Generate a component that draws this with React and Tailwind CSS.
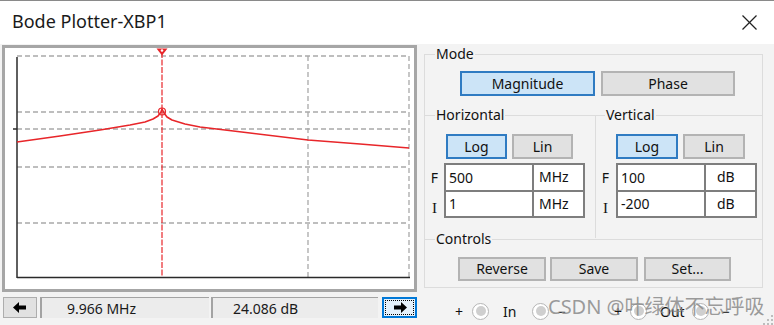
import React from "react";

const F = "font-['Noto_Sans',sans-serif]";

function Btn({ children, w, h = 25, active = false }) {
  return (
    <div
      className={`flex items-center justify-center border-2 text-[14px] leading-none text-[#111] ${
        active ? "bg-[#cce4f7] border-[#2f7bc2]" : "bg-[#e1e1e1] border-[#b3b3b3]"
      }`}
      style={{ width: w, height: h }}
    >
      {children}
    </div>
  );
}

function Inputs({ rows, unitPad }) {
  return (
    <div className="grid grid-cols-[86px_49px] grid-rows-[25px_24px] gap-[2px] p-[2px] bg-[#7e7e7e]">
      {rows.map(([v, u], i) => (
        <React.Fragment key={i}>
          <div className="bg-white flex items-center pl-[3px] text-[14px] leading-[20px] text-[#111]">{v}</div>
          <div className={`bg-white flex items-start pt-[2px] ${unitPad} text-[14px] leading-[20px] text-[#111]`}>{u}</div>
        </React.Fragment>
      ))}
    </div>
  );
}

function Labels() {
  return (
    <div className="flex flex-col w-[19px] text-[14px] text-[#111]">
      <div className="h-[28px] flex items-center justify-center">F</div>
      <div className="h-[27px] flex items-center justify-center pt-[7px] font-['Liberation_Serif',serif] text-[15px]">I</div>
    </div>
  );
}

function Radio() {
  return (
    <div className="w-[17px] h-[17px] rounded-full border border-[#b5b5b5] bg-white flex items-center justify-center">
      <div className="w-[10px] h-[10px] rounded-full bg-[#cfcfcf]" />
    </div>
  );
}

function Arrow({ dir }) {
  return (
    <svg width="14" height="11" viewBox="0 0 14 11">
      {dir === "left" ? (
        <polygon points="0,5.5 6,0 6,3.5 13,3.5 13,7.5 6,7.5 6,11" fill="#000" />
      ) : (
        <polygon points="14,5.5 8,0 8,3.5 1,3.5 1,7.5 8,7.5 8,11" fill="#000" />
      )}
    </svg>
  );
}

export default function App() {
  const gridY = [56, 112, 129, 167, 223];
  return (
    <div className={`relative w-[774px] h-[325px] overflow-hidden bg-[#f3f3f3] ${F}`}>
      {/* Title bar */}
      <div className="h-[44px] bg-white border-t border-[#8a8a8a] flex items-start justify-between">
        <div className="pl-[12px] pt-[8px] text-[18px] leading-[24px] text-[#1a1a1a]">Bode Plotter-XBP1</div>
        <div className="pt-[14px] pr-[17px]">
          <svg width="15" height="15" viewBox="0 0 15 15">
            <line x1="0.5" y1="0.5" x2="14.5" y2="14.5" stroke="#222" strokeWidth="1.2" />
            <line x1="14.5" y1="0.5" x2="0.5" y2="14.5" stroke="#222" strokeWidth="1.2" />
          </svg>
        </div>
      </div>

      <div className="flex items-start">
        {/* Left: plot */}
        <div className="w-[420px] pl-[2px] pt-[1px]">
          <div className="w-[415px] h-[247px] border-[3px] border-[#a6a6a6] bg-white">
            <svg width="409" height="241" viewBox="5 48 409 241" className="block">
              {gridY.map((y) => (
                <line key={y} x1="17" y1={y} x2="409" y2={y} stroke="#a9a9a9" strokeWidth="1.3" strokeDasharray="5 3" />
              ))}
              <line x1="308" y1="56" x2="308" y2="277" stroke="#a9a9a9" strokeWidth="1.3" strokeDasharray="5 3" />
              <line x1="409" y1="56" x2="409" y2="277" stroke="#a9a9a9" strokeWidth="1.3" strokeDasharray="5 3" />
              <line x1="17" y1="57" x2="17" y2="278" stroke="#2a2a2a" strokeWidth="1.5" />
              <line x1="17" y1="277.5" x2="410" y2="277.5" stroke="#2a2a2a" strokeWidth="1.5" />
              <line x1="13" y1="129" x2="17" y2="129" stroke="#2a2a2a" strokeWidth="1.5" />
              <line x1="162" y1="52" x2="162" y2="277" stroke="#e8262a" strokeWidth="1.2" strokeDasharray="6 1.5" />
              <polygon points="156.5,48.5 167.5,48.5 162,55.5" fill="#e8262a" />
              <circle cx="162" cy="50.5" r="1.3" fill="#fff" />
              <polyline
                points="17,142 60,136 100,130 130,125 145,122 153,119 158,116 161,112 162,109 164,113 167,117 172,120 185,124 200,127 250,133 308,140 360,144 409,148"
                fill="none"
                stroke="#e8262a"
                strokeWidth="1.6"
                strokeLinejoin="round"
              />
              <circle cx="162" cy="111.5" r="3.5" fill="none" stroke="#e8262a" strokeWidth="1.2" />
            </svg>
          </div>
          {/* bottom bar */}
          <div className="mt-[5px] h-[21px] flex items-stretch">
            <div className="ml-[1px] w-[34px] bg-[#e1e1e1] border border-[#adadad] flex items-center justify-center">
              <Arrow dir="left" />
            </div>
            <div className="ml-[3px] w-[169px] bg-[#ececec] border-l-2 border-t border-[#a3a3a3] flex items-center pl-[25px] text-[14px] text-[#1a1a1a]">
              9.966 MHz
            </div>
            <div className="ml-[2px] w-[167px] bg-[#ececec] border-l-2 border-t border-[#a3a3a3] flex items-center pl-[20px] text-[14px] text-[#1a1a1a]">
              24.086 dB
            </div>
            <div className="ml-[4px] w-[35px] bg-[#e5f1fb] border-2 border-[#0078d7] p-[1px]">
              <div className="w-full h-full border border-dotted border-black flex items-center justify-center">
                <Arrow dir="right" />
              </div>
            </div>
          </div>
        </div>

        {/* Right panel */}
        <div className="ml-[4px] w-[339px]">
          <fieldset className="border border-[#dcdcdc] w-[339px] p-0 m-0">
            <legend className="ml-[10px] px-[1px] text-[14px] leading-[20px] text-[#111]">Mode</legend>
            <div className="mt-[7px] pl-[35px] flex gap-[6px]">
              <Btn w={135} active>Magnitude</Btn>
              <Btn w={134}>Phase</Btn>
            </div>
            <div className="mt-[9px] flex">
              <fieldset className="w-[171px] border-t border-r border-[#dcdcdc] p-0 m-0 pb-[20px]">
                <legend className="ml-[10px] px-[1px] text-[14px] leading-[20px] text-[#111]">Horizontal</legend>
                <div className="mt-[9px] pl-[21px] flex gap-[5px]">
                  <Btn w={61} active>Log</Btn>
                  <Btn w={61}>Lin</Btn>
                </div>
                <div className="mt-[4px] flex">
                  <Labels />
                  <Inputs rows={[["500", "MHz"], ["1", "MHz"]]} unitPad="pl-[5px]" />
                </div>
              </fieldset>
              <fieldset className="flex-1 border-t border-[#dcdcdc] p-0 m-0 pb-[20px]">
                <legend className="ml-[9px] px-[1px] text-[14px] leading-[20px] text-[#111]">Vertical</legend>
                <div className="mt-[9px] pl-[20px] flex gap-[5px]">
                  <Btn w={62} active>Log</Btn>
                  <Btn w={62}>Lin</Btn>
                </div>
                <div className="mt-[4px] flex">
                  <div className="w-[20px]">
                    <Labels />
                  </div>
                  <Inputs rows={[["100", "dB"], ["-200", "dB"]]} unitPad="pl-[11px]" />
                </div>
              </fieldset>
            </div>
            <fieldset className="-mt-[9px] border-t border-[#dcdcdc] p-0 m-0 pb-[6px]">
              <legend className="ml-[10px] px-[1px] text-[14px] leading-[20px] text-[#111]">Controls</legend>
              <div className="mt-[8px] pl-[33px] flex">
                <Btn w={88} h={24}>Reverse</Btn>
                <div className="ml-[4px]"><Btn w={88} h={24}>Save</Btn></div>
                <div className="ml-[6px]"><Btn w={87} h={24}>Set...</Btn></div>
              </div>
            </fieldset>
          </fieldset>

          {/* radio row */}
          <div className="mt-[14px] h-[18px] flex items-center text-[14px] text-[#111]">
            <span className="ml-[31px] w-[8px]">+</span>
            <span className="ml-[9px]"><Radio /></span>
            <span className="ml-[14px] w-[15px]">In</span>
            <span className="ml-[14px]"><Radio /></span>
            <span className="ml-[9px] w-[8px]">−</span>
            <span className="ml-[48px] w-[8px]">+</span>
            <span className="ml-[8px]"><Radio /></span>
            <span className="ml-[13px] w-[28px]">Out</span>
            <span className="ml-[4px]"><Radio /></span>
            <span className="ml-[13px] w-[8px]">−</span>
          </div>
        </div>
      </div>

      {/* watermark */}
      <div className="absolute left-[548px] top-[294px] text-[20px] leading-[26px] text-[#8a8a8a]/85 font-['Noto_Sans','Noto_Sans_CJK_SC',sans-serif] whitespace-nowrap">
        CSDN @叶绿体不忘呼吸
      </div>
      {/* resize grip */}
      <svg className="absolute right-0 bottom-0" width="14" height="12" viewBox="0 0 14 12">
        {[[11, 2], [11, 6], [7, 6], [11, 10], [7, 10], [3, 10]].map(([x, y], i) => (
          <rect key={i} x={x} y={y} width="2" height="2" fill="#bdbdbd" />
        ))}
      </svg>
    </div>
  );
}
